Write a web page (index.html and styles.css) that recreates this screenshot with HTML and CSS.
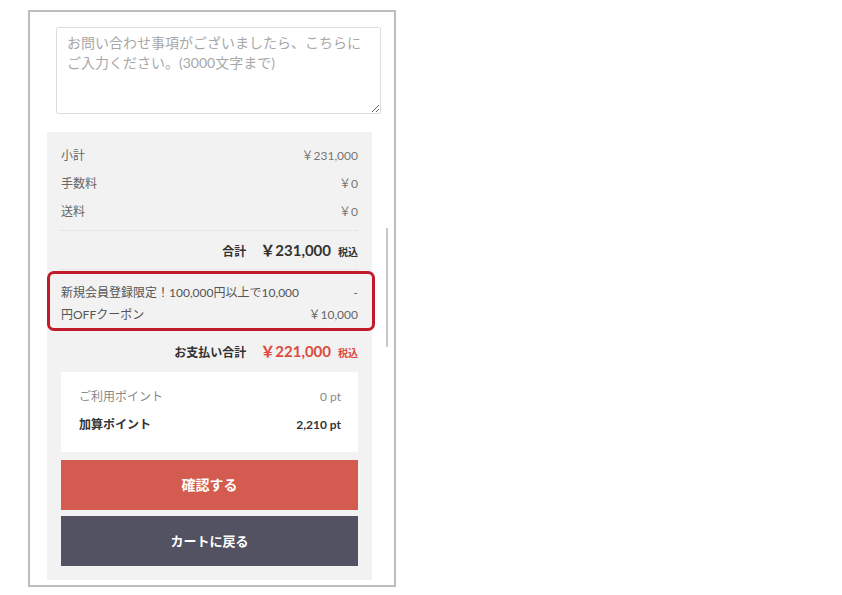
FILE: index.html
```html
<!DOCTYPE html>
<html>
<head>
    <meta charset="utf-8">
    <link rel="stylesheet" href="styles.css">
</head>
<body>
<div id="orderFrame" class="frame">
    <textarea class="inquiry" placeholder="お問い合わせ事項がございましたら、こちらにご入力ください。(3000文字まで)"></textarea>
    <div id="summary" class="summary">
        <div class="row"><span>小計</span><span>￥231,000</span></div>
        <div class="row"><span>手数料</span><span>￥0</span></div>
        <div class="row"><span>送料</span><span>￥0</span></div>
        <div class="total">
            <span class="totalLabel">合計</span>
            <span class="totalPrice">￥231,000</span>
            <span class="tax">税込</span>
        </div>
        <div class="coupon">
            <span>新規会員登録限定！100,000円以上で10,000<br>円OFFクーポン</span>
            <span class="couponValue">-<br>￥10,000</span>
        </div>
        <div class="total pay">
            <span class="totalLabel">お支払い合計</span>
            <span class="totalPrice">￥221,000</span>
            <span class="tax">税込</span>
        </div>
        <div class="points">
            <div class="pointRow used"><span>ご利用ポイント</span><span>0 pt</span></div>
            <div class="pointRow earned"><span>加算ポイント</span><span>2,210 pt</span></div>
        </div>
        <div class="btn confirm">確認する</div>
        <div class="btn back">カートに戻る</div>
    </div>
    <div class="scrollThumb"></div>
</div>
</body>
</html>
```

FILE: styles.css
```css
body {
    margin: 0;
    background-color: white;
    font-family: Lato, "Noto Sans CJK JP", sans-serif;
    color: #555;
}
.frame {
    position: relative;
    margin: 10px 0 0 28px;
    width: 364px;
    height: 573px;
    border: 2px solid #bdbdbd;
    overflow: hidden;
}
.inquiry {
    display: block;
    box-sizing: border-box;
    margin: 15px 0 0 26px;
    width: 325px;
    height: 87px;
    padding: 5px 10px;
    border: 1px solid #ddd;
    border-radius: 2px;
    font-family: Lato, "Noto Sans CJK JP", sans-serif;
    font-size: 14px;
    line-height: 20px;
    color: #555;
}
.inquiry::placeholder {
    color: #a8a8a8;
}
.summary {
    box-sizing: border-box;
    margin: 18px 0 0 17px;
    width: 325px;
    height: 448px;
    padding: 10px 14px 14px;
    background-color: #f2f2f2;
}
.row {
    display: flex;
    justify-content: space-between;
    height: 28px;
    line-height: 28px;
    font-size: 12px;
    color: #666;
}
.row span:last-child {
    color: #777;
}
.total {
    display: flex;
    justify-content: flex-end;
    align-items: baseline;
    gap: 14px;
    margin-top: 4px;
    height: 38px;
    line-height: 38px;
    border-top: 1px dotted #d8d8d8;
    border-bottom: 1px dotted #d8d8d8;
    color: #333;
}
.totalLabel {
    font-size: 12px;
    font-weight: bold;
}
.totalPrice {
    font-size: 15px;
    font-weight: bold;
}
.tax {
    margin-left: -7px;
    font-size: 10px;
    font-weight: bold;
}
.pay {
    margin-top: 0;
    height: 41px;
    line-height: 41px;
    border: none;
}
.pay .totalPrice, .pay .tax {
    color: #dc4a3f;
}
.coupon {
    display: flex;
    justify-content: space-between;
    box-sizing: border-box;
    margin: 1px -17px 0 -14px;
    height: 60px;
    padding: 8px 14px 2px 11px;
    border: 3px solid #c11a2b;
    border-radius: 7px;
    font-size: 12px;
    line-height: 22px;
    color: #555;
}
.couponValue {
    text-align: right;
    color: #666;
}
.points {
    box-sizing: border-box;
    height: 80px;
    padding: 11px 17px 13px 18px;
    background-color: white;
}
.pointRow {
    display: flex;
    justify-content: space-between;
    height: 28px;
    line-height: 28px;
    font-size: 12px;
}
.used {
    color: #888;
}
.earned {
    color: #333;
    font-weight: bold;
}
.btn {
    height: 50px;
    line-height: 50px;
    text-align: center;
    color: white;
    font-weight: bold;
}
.confirm {
    margin-top: 8px;
    background-color: #d35b4f;
    font-size: 14px;
}
.back {
    margin-top: 6px;
    background-color: #525262;
    font-size: 13px;
}
.scrollThumb {
    position: absolute;
    left: 356px;
    top: 216px;
    width: 2px;
    height: 119px;
    background-color: #c8c8c8;
}
```
